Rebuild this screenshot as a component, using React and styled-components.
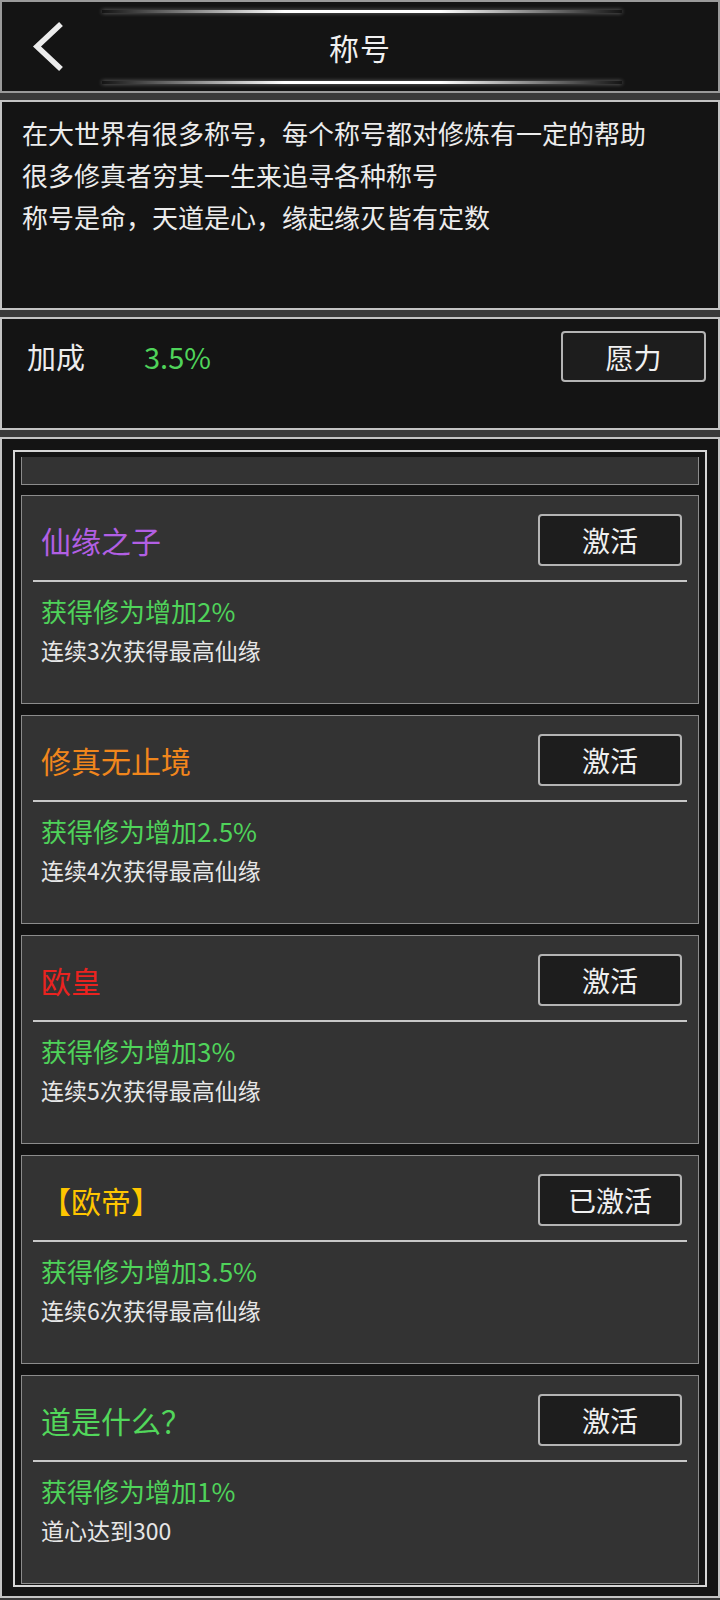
import React from "react";
import styled, { createGlobalStyle } from "styled-components";

const GlobalStyle = createGlobalStyle`
    html, body {
        margin: 0;
        padding: 0;
        background: #3a3a3a;
    }
    body {
        font-family: "Noto Sans CJK SC", "Noto Sans", sans-serif;
        color: #e8e8e8;
    }
    * {
        box-sizing: border-box;
    }
`;

const Page = styled.div`
    width: 720px;
    display: flex;
    flex-direction: column;
    gap: 7px;
`;

const Panel = styled.section`
    background: #141414;
    border: 2px solid #c4c4c4;
    height: ${(p) => p.$height}px;
`;

// top bar with the two glowing rules
const Header = styled(Panel)`
    position: relative;
    display: grid;
    grid-template-columns: 1fr auto 1fr;
    align-items: center;
    border-color: #9a9a9a;

    &::before,
    &::after {
        content: "";
        position: absolute;
        left: 100px;
        width: 520px;
        height: 3px;
        background: linear-gradient(90deg, rgba(255, 255, 255, 0) 0%, #ffffff 35%, #ffffff 65%, rgba(255, 255, 255, 0) 100%);
        box-shadow: 0 0 4px rgba(255, 255, 255, 0.4);
    }
    &::before {
        top: 8px;
    }
    &::after {
        top: 79px;
    }
`;

const BackButton = styled.button`
    justify-self: start;
    margin-left: 28px;
    padding: 0;
    background: none;
    border: none;
    display: flex;
`;

const HeaderTitle = styled.h1`
    margin: 0;
    font-size: 30px;
    font-weight: 400;
    color: #f0f0f0;
    letter-spacing: 1px;
`;

const Intro = styled(Panel)`
    padding: 10px 20px;
    font-size: 26px;
    line-height: 42px;
    color: #ececec;
`;

const BonusRow = styled(Panel)`
    display: flex;
    align-items: flex-start;
    padding: 12px 12px 0 25px;
`;

const BonusLabel = styled.span`
    font-size: 29px;
    line-height: 51px;
    color: #ececec;
    width: 117px;
`;

const BonusValue = styled.span`
    font-size: 29px;
    line-height: 51px;
    color: #4fd35a;
`;

const ActionButton = styled.button`
    margin-left: auto;
    flex: none;
    width: ${(p) => p.$width || 144}px;
    height: ${(p) => p.$tall || 52}px;
    background: #1d1d1d;
    border: 2px solid #b4b4b4;
    border-radius: 4px;
    color: #f0f0f0;
    font-family: inherit;
    font-size: 28px;
    padding: 0;
`;

const ListPanel = styled(Panel)`
    padding: 11px 11px 0;
    overflow: hidden;
`;

const Frame = styled.div`
    border: 2px solid #d6d6d6;
    padding: 5px 6px 0;
    display: flex;
    flex-direction: column;
    gap: 11px;
    height: 1137px;
    overflow: hidden;
`;

// bottom edge of the card scrolled out of view
const Peek = styled.div`
    height: 28px;
    flex: none;
    background: #333333;
    border: 1px solid #8c8c8c;
    border-top: none;
    margin-bottom: -1px;
`;

const Card = styled.article`
    flex: none;
    height: 209px;
    background: #333333;
    border: 1px solid #8c8c8c;
    display: flex;
    flex-direction: column;
`;

const CardHead = styled.div`
    display: flex;
    align-items: flex-start;
    padding: 18px 16px 0 19px;
    height: 84px;
`;

const CardTitle = styled.h2`
    margin: 0;
    font-size: 30px;
    line-height: 52px;
    font-weight: 400;
    color: ${(p) => p.$color};
`;

const Divider = styled.hr`
    margin: 0 11px;
    border: none;
    height: 2px;
    background: #c8c8c8;
`;

const CardBody = styled.div`
    padding: 12px 19px 0;
    display: flex;
    flex-direction: column;
    gap: 7px;
`;

const Effect = styled.p`
    margin: 0;
    font-size: 26px;
    line-height: 34px;
    color: #4fd35a;
`;

const Condition = styled.p`
    margin: 0;
    font-size: 23px;
    line-height: 30px;
    color: #e6e6e6;
`;

const titles = [
    { name: "仙缘之子", color: "#b25fe4", action: "激活", effect: "获得修为增加2%", need: "连续3次获得最高仙缘" },
    { name: "修真无止境", color: "#f0861c", action: "激活", effect: "获得修为增加2.5%", need: "连续4次获得最高仙缘" },
    { name: "欧皇", color: "#ea2320", action: "激活", effect: "获得修为增加3%", need: "连续5次获得最高仙缘" },
    { name: "【欧帝】", color: "#ffc600", action: "已激活", effect: "获得修为增加3.5%", need: "连续6次获得最高仙缘" },
    { name: "道是什么？", color: "#52d75b", action: "激活", effect: "获得修为增加1%", need: "道心达到300" },
];

const App = () => {
    return (
        <Page>
            <GlobalStyle />
            <Header as="header" $height={93}>
                <BackButton aria-label="返回">
                    <svg width="36" height="52" viewBox="0 0 36 52">
                        <path d="M31 3 L7 25.5 L31 48" fill="none" stroke="#ececec" strokeWidth="5.5" strokeLinejoin="miter" />
                    </svg>
                </BackButton>
                <HeaderTitle>称号</HeaderTitle>
                <span />
            </Header>

            <Intro $height={210}>
                在大世界有很多称号，每个称号都对修炼有一定的帮助
                <br />
                很多修真者穷其一生来追寻各种称号
                <br />
                称号是命，天道是心，缘起缘灭皆有定数
            </Intro>

            <BonusRow $height={113}>
                <BonusLabel>加成</BonusLabel>
                <BonusValue>3.5%</BonusValue>
                <ActionButton $width={145} $tall={51}>愿力</ActionButton>
            </BonusRow>

            <ListPanel $height={1161}>
                <Frame>
                    <Peek />
                    {titles.map((t) => (
                        <Card key={t.name}>
                            <CardHead>
                                <CardTitle $color={t.color}>{t.name}</CardTitle>
                                <ActionButton>{t.action}</ActionButton>
                            </CardHead>
                            <Divider />
                            <CardBody>
                                <Effect>{t.effect}</Effect>
                                <Condition>{t.need}</Condition>
                            </CardBody>
                        </Card>
                    ))}
                </Frame>
            </ListPanel>
        </Page>
    );
};

export default App;
